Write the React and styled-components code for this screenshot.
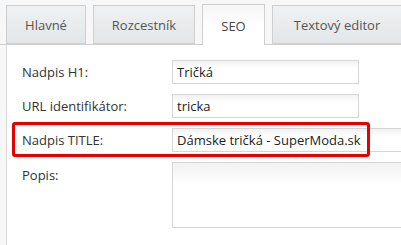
import React from "react";
import styled, { createGlobalStyle } from "styled-components";

const Global = createGlobalStyle`
  html, body {
    margin: 0;
    padding: 0;
    background: #f7f7f7;
    font-family: "Open Sans", "Liberation Sans", sans-serif;
    overflow: hidden;
  }
`;

const Page = styled.div`
  width: 401px;
  height: 245px;
  overflow: hidden;
`;

const TabBar = styled.div`
  display: flex;
  align-items: flex-end;
  gap: 7px;
  height: 45px;
  padding-left: 6px;
  border-bottom: 1px solid #cfcfcf;
  box-sizing: border-box;
`;

const Tab = styled.div`
  flex: none;
  width: ${(p) => p.w}px;
  height: ${(p) => (p.active ? 41 : 39)}px;
  margin-bottom: ${(p) => (p.active ? -1 : 0)}px;
  box-sizing: border-box;
  border: 1px solid #cfcfcf;
  border-bottom: ${(p) => (p.active ? "none" : "1px solid #cfcfcf")};
  background: ${(p) =>
    p.active
      ? "linear-gradient(#f6f6f6, #ffffff 60%)"
      : "linear-gradient(#eff1f2, #e3e6e8)"};
  display: flex;
  align-items: center;
  justify-content: center;
  font-size: 13px;
  color: ${(p) => (p.active ? "#444" : "#555")};
  padding-top: ${(p) => (p.active ? 1 : 0)}px;
`;

const Panel = styled.div`
  margin-left: 6px;
  border-left: 1px solid #d8d8d8;
  background: #fff;
  height: 200px;
  padding-top: 15px;
  box-sizing: border-box;
`;

const Row = styled.div`
  position: relative;
  display: flex;
  align-items: ${(p) => (p.top ? "flex-start" : "center")};
  padding-left: 15px;
  margin-bottom: 10px;

  &::after {
    content: "";
    display: ${(p) => (p.marked ? "block" : "none")};
    position: absolute;
    left: 5px;
    top: -6px;
    width: 358px;
    height: 35px;
    box-sizing: border-box;
    border: 3px solid #e60000;
    border-radius: 3px;
  }
`;

const Label = styled.div`
  flex: none;
  width: 150px;
  font-size: 13px;
  color: #333;
  padding-top: ${(p) => (p.top ? 4 : 0)}px;
`;

const Field = styled.div`
  flex: none;
  width: ${(p) => p.w}px;
  height: ${(p) => p.h || 24}px;
  box-sizing: border-box;
  border: 1px solid #d6d6d6;
  background: linear-gradient(#f2f2f2, #ffffff 35%);
  padding: 0 4px;
  font-size: 13px;
  color: #222;
  display: flex;
  align-items: center;
  white-space: nowrap;
`;

const tabs = [
  { label: "Hlavné", w: 80 },
  { label: "Rozcestník", w: 102 },
  { label: "SEO", w: 63, active: true },
  { label: "Textový editor", w: 130 },
];

export default function App() {
  return (
    <Page>
      <Global />
      <TabBar>
        {tabs.map((t) => (
          <Tab key={t.label} w={t.w} active={t.active}>
            {t.label}
          </Tab>
        ))}
      </TabBar>
      <Panel>
        <Row>
          <Label>Nadpis H1:</Label>
          <Field w={187}>Tričká</Field>
        </Row>
        <Row>
          <Label>URL identifikátor:</Label>
          <Field w={187}>tricka</Field>
        </Row>
        <Row marked>
          <Label>Nadpis TITLE:</Label>
          <Field w={260}>Dámske tričká - SuperModa.sk</Field>
        </Row>
        <Row top>
          <Label top>Popis:</Label>
          <Field w={260} h={66} />
        </Row>
      </Panel>
    </Page>
  );
}
